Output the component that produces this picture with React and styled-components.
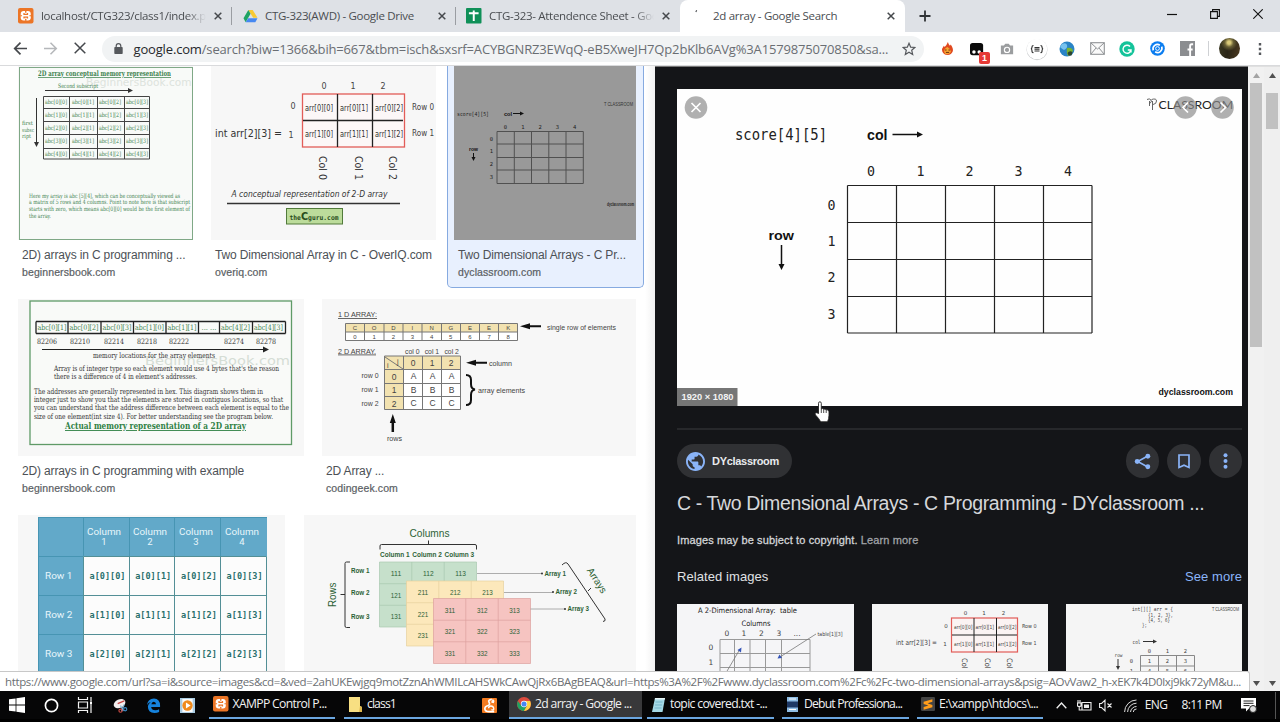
import React from "react";
import styled, { createGlobalStyle } from "styled-components";

const Global = createGlobalStyle`
  * { box-sizing: border-box; }
  html, body { margin: 0; padding: 0; background: #000; overflow: hidden; }
  svg { display: block; flex: none; }
`;

const ui = `"Open Sans", "Noto Sans", sans-serif`;
const arial = `"Liberation Sans", Arial, sans-serif`;

const Screen = styled.div`
  width: 1280px;
  height: 722px;
  display: flex;
  flex-direction: column;
  background: #000;
  overflow: hidden;
  font-family: ${arial};
`;

/* ---------- Browser tabs ---------- */
const TabStrip = styled.div`
  height: 32px;
  flex: none;
  display: flex;
  background: #dee1e6;
  padding-left: 8px;
`;
const Tab = styled.div`
  width: ${(p) => p.$w || 224}px;
  height: 32px;
  display: flex;
  align-items: center;
  padding: 0 9px 0 10px;
  background: ${(p) => (p.$active ? "#fff" : "transparent")};
  border-radius: 8px 8px 0 0;
`;
const Favicon = styled.span`
  width: 16px;
  display: flex;
  justify-content: center;
`;
const TabTitle = styled.span`
  flex: 1;
  margin-left: 7px;
  font: 11.5px/16px ${ui};
  letter-spacing: -0.3px;
  color: #4a4d51;
  white-space: nowrap;
  overflow: hidden;
  ${(p) => p.$fade && "mask-image: linear-gradient(90deg, #000 88%, transparent);"}
`;
const TabClose = styled.span`
  width: 9px;
  margin-left: 8px;
`;
const TabRule = styled.span`
  width: 1px;
  height: 18px;
  margin: 7px 0 0 -1px;
  background: #9a9da2;
`;
const NewTab = styled.div`
  width: 40px;
  height: 32px;
  display: flex;
  align-items: center;
  justify-content: center;
`;
const WindowControls = styled.div`
  margin-left: auto;
  width: 130px;
  height: 27px;
  display: flex;
  align-items: center;
  justify-content: space-around;
`;

/* ---------- Toolbar ---------- */
const Toolbar = styled.div`
  height: 34px;
  flex: none;
  display: flex;
  align-items: center;
  background: #fff;
  border-bottom: 1px solid #d9dadc;
  padding-left: 13px;
`;
const NavIcons = styled.div`
  width: 89px;
  display: flex;
  gap: 15px;
`;
const Omnibox = styled.div`
  width: 822px;
  height: 26px;
  border-radius: 13px;
  background: #f1f3f4;
  display: flex;
  align-items: center;
  padding: 0 8px 0 12px;
`;
const Url = styled.span`
  flex: 1;
  margin-left: 10.5px;
  font: 13px/18px ${ui};
  letter-spacing: -0.16px;
  white-space: nowrap;
  color: #6a6e73;
  b { font-weight: 400; color: #26282b; }
`;
const Extensions = styled.div`
  display: flex;
  align-items: center;
  margin-left: 8px;
`;
const Ext = styled.span`
  width: 30px;
  height: 26px;
  display: flex;
  align-items: center;
  justify-content: center;
  position: relative;
`;
const Badge = styled.span`
  position: absolute;
  right: 2px;
  bottom: -2px;
  width: 11px;
  height: 12px;
  border-radius: 2px;
  background: #e53935;
  color: #fff;
  font: bold 9px/12px ${arial};
  text-align: center;
`;
const MenuDots = styled.span`
  width: 4px;
  margin-left: 18px;
`;
const Rule = styled.span`
  width: 1px;
  height: 15px;
  margin: 0 10px 0 6px;
  background: #cfd1d4;
`;
const Avatar = styled.span`
  width: 21px;
  height: 21px;
  border-radius: 50%;
  background: radial-gradient(circle at 48% 22%, #d9c978 0 8%, #6a6136 22%, transparent 42%),
    linear-gradient(100deg, #3c3a22, #2a2517 45%, #4c3a20);
`;

/* ---------- Page ---------- */
const Page = styled.div`
  height: 625px;
  flex: none;
  display: flex;
  background: #fff;
  position: relative;
  overflow: hidden;
`;
const Results = styled.div`
  width: 655px;
  padding-left: 18px;
  flex: none;
  background: linear-gradient(90deg, #fff 0 645px, #f2f2f2 655px);
`;
const ResultRow = styled.div`
  display: flex;
  gap: ${(p) => p.$gap || 18}px;
  margin-bottom: 18px;
`;
const Card = styled.div`
  width: ${(p) => p.$w}px;
  ${(p) =>
    p.$selected &&
    `
    width: ${p.$w + 15}px;
    margin: 0 -8px -7px -7px;
    padding: 0 7px 6px 6px;
    background: #e8f0fe;
    border: 1px solid #86aae0;
    border-top: 0;
    border-radius: 0 0 5px 5px;
  `}
`;
const CardTitle = styled.div`
  padding: 6px 0 0 4px;
  height: 24px;
  font: 12px/18px ${arial};
  letter-spacing: -0.15px;
  color: #4d5156;
  white-space: nowrap;
`;
const CardSite = styled.div`
  height: 17px;
  padding-left: 4px;
  font: 10.5px/17px ${arial};
  letter-spacing: 0.1px;
  color: #5a5e63;
  -webkit-text-stroke: 0.2px #5a5e63;
`;

const Viewer = styled.div`
  width: 593px;
  flex: none;
  background: #141518;
  border-top: 1px solid #777;
  padding: 22px 6px 0 22px;
`;
const Divider = styled.div`
  height: 2px;
  margin-top: 22px;
  background: #27282b;
`;
const SourceRow = styled.div`
  display: flex;
  align-items: center;
  gap: 8px;
  height: 34px;
  margin-top: 14px;
`;
const SourceChip = styled.div`
  width: 115px;
  height: 34px;
  margin-right: auto;
  display: flex;
  align-items: center;
  gap: 7px;
  padding-left: 9px;
  border-radius: 17px;
  background: #303134;
  color: #e8eaed;
  font: bold 11px/16px ${arial};
  letter-spacing: -0.3px;
`;
const RoundButton = styled.div`
  width: 33.5px;
  height: 34px;
  border-radius: 50%;
  background: #303134;
  display: flex;
  align-items: center;
  justify-content: center;
`;
const ViewerTitle = styled.div`
  margin-top: 13px;
  font: 19.5px/24px ${arial};
  letter-spacing: -0.36px;
  color: #d6d8db;
  white-space: nowrap;
`;
const Copyright = styled.div`
  margin-top: 17px;
  font: 11px/16px ${arial};
  letter-spacing: 0.13px;
  color: #d2d4d7;
  -webkit-text-stroke: 0.3px #d2d4d7;
  span { color: #a0a3a7; -webkit-text-stroke-color: #a0a3a7; }
`;
const RelatedHead = styled.div`
  display: flex;
  justify-content: space-between;
  margin-top: 20px;
  font: 13px/18px ${arial};
  letter-spacing: 0.08px;
  color: #e0e2e5;
  span { color: #8ab4f8; }
`;
const RelatedRow = styled.div`
  display: flex;
  justify-content: space-between;
  margin-top: 18px;
`;
const ScrollTrack = styled.div`
  width: 16px;
  background: ${(p) => p.$bg};
  border-top: 1px solid #e0e0e0;
  display: flex;
  flex-direction: column;
  align-items: center;
  padding: 6px 0 5px;
`;
const ScrollThumb = styled.div`
  width: 12px;
  height: ${(p) => p.$h}px;
  margin: ${(p) => p.$mt}px 0 auto;
  background: #c1c1c1;
`;
const StatusBar = styled.div`
  position: absolute;
  left: 0;
  bottom: 0;
  width: 1250px;
  height: 20px;
  padding-left: 5px;
  background: #fff;
  border-top: 1px solid #c8c8c8;
  border-right: 1px solid #c8c8c8;
  border-radius: 0 3px 0 0;
  font: 11.5px/19px ${ui};
  letter-spacing: -0.36px;
  color: #6c6f73;
  white-space: nowrap;
  overflow: hidden;
`;
const Pointer = styled.span`
  position: absolute;
  left: 814px;
  top: 335px;
`;

/* ---------- Taskbar ---------- */
const Taskbar = styled.div`
  height: 28px;
  flex: none;
  display: flex;
  background: #060607;
  color: #f2f2f2;
`;
const PinnedIcon = styled.div`
  width: ${(p) => p.$w}px;
  height: 28px;
  display: flex;
  align-items: center;
  justify-content: center;
`;
const TaskButton = styled.div`
  width: ${(p) => p.$w}px;
  height: 28px;
  margin-left: ${(p) => p.$ml || 0}px;
  padding-left: ${(p) => p.$pl || 4}px;
  display: flex;
  align-items: center;
  gap: ${(p) => p.$gap || 4}px;
  background: ${(p) => (p.$active ? "#38383a" : "transparent")};
  border-bottom: 2px solid #6ba6e0;
  font: 12.2px/18px ${ui};
  letter-spacing: ${(p) => p.$ls || -0.66}px;
  white-space: nowrap;
`;
const Tray = styled.div`
  display: flex;
  align-items: center;
  font: 12px/18px ${ui};
  letter-spacing: -0.7px;
  white-space: nowrap;
`;
const TrayItem = styled.span`
  width: ${(p) => p.$w}px;
  display: flex;
  justify-content: center;
`;
const ShowDesktop = styled.span`
  width: 1px;
  height: 27px;
  background: #555;
  margin-left: 6px;
`;

/* ---------- Drawing helpers ---------- */
const T = ({ x, y, s = 8, w, a = "start", f = arial, c = "#444", children, ...rest }) => (
  <text x={x} y={y} fontSize={s} textAnchor={a} fill={c} fontFamily={f}
    {...(w ? { textLength: w, lengthAdjust: "spacingAndGlyphs" } : {})} {...rest}>
    {children}
  </text>
);
const Grid = ({ xs, ys, c = "#333", w = 1 }) => (
  <path fill="none" stroke={c} strokeWidth={w}
    d={xs.map((x) => `M${x} ${ys[0]}V${ys[ys.length - 1]}`).join("") + ys.map((y) => `M${xs[0]} ${y}H${xs[xs.length - 1]}`).join("")} />
);
const Pic = ({ x, y, w, h, bg = "#f7f7f7", children }) => (
  <svg width={w} height={h} viewBox={`${x} ${y} ${w} ${h}`}>
    <rect x={x} y={y} width={w} height={h} fill={bg} />
    {children}
  </svg>
);
const dj = `"DejaVu Sans", sans-serif`;
const djm = `"DejaVu Sans Mono", monospace`;
const djs = `"DejaVu Serif", serif`;
const green = "#3f8350";
const dark = "#2d6236";

const MemoryPic = () => (
  <Pic x={18} y={66} w={175} h={174}>
    <rect x="19.5" y="67.5" width="173" height="172" fill="#f8faf8" stroke="#7fa886" />
    <T x={86} y={86} s={10.5} w={105.5} c="#dde3dd" f={dj}>BeginnersBook.com</T>
    <T x={38} y={76} s={7.5} w={133} c={green} f={djs} fontWeight="bold" textDecoration="underline">2D array conceptual memory representation</T>
    <T x={58} y={88} s={6} w={40} c={green} f={djs}>Second subscript</T>
    <path d="M45 90.5H129M36.5 98V142" stroke="#333" />
    <path d="M128 88l5 2.5l-5 2.5zM34 142h5l-2.5 5z" fill="#333" />
    <T x={22} y={125} s={5.5} w={11} c={green} f={djs}>first</T>
    <T x={22} y={132} s={5.5} w={12} c={green} f={djs}>subsc</T>
    <T x={22} y={138} s={5.5} w={9} c={green} f={djs}>ript</T>
    <Grid xs={[43.5, 69.5, 97.5, 124.5, 149.5]} ys={[96.5, 108.5, 121.5, 134.5, 148.5, 159]} c="#444" />
    {[0, 1, 2, 3, 4].map((r) => [0, 1, 2, 3].map((k) => (
      <T key={`${r}${k}`} x={[45, 72, 99, 126][k]} y={104 + r * 13} s={6} w={22} c={green} f={djs}>{`abc[${r}][${k}]`}</T>
    )))}
    <T x={29} y={197.5} s={6} w={151} c={green} f={djs}>Here my array is abc [5][4], which can be conceptually viewed as</T>
    <T x={29} y={204} s={6} w={161} c={green} f={djs}>a matrix of 5 rows and 4 columns. Point to note here is that subscript</T>
    <T x={29} y={211} s={6} w={161} c={green} f={djs}>starts with zero, which means abc[0][0] would be the first element of</T>
    <T x={29} y={217.5} s={6} w={22} c={green} f={djs}>the array.</T>
  </Pic>
);

const OverIqPic = () => (
  <Pic x={211} y={66} w={225} h={174}>
    {[0, 1, 2].map((k) => <T key={k} x={[324, 353, 383][k]} y={89} a="middle" s={8} f={dj}>{k}</T>)}
    <T x={293} y={109} a="middle" s={8} f={dj}>0</T>
    <T x={291} y={138} a="middle" s={8} f={dj}>1</T>
    <T x={215} y={136.5} s={10} w={67} f={dj} c="#333">int arr[2][3] =</T>
    <rect x="302.5" y="94" width="102" height="53" fill="#fcf7f7" stroke="#e25c58" strokeWidth="1.3" />
    <path d="M303 120.5H403M337.5 94V147M372.5 94V147" stroke="#222" strokeWidth="1.3" />
    {[0, 1].map((r) => [0, 1, 2].map((k) => (
      <T key={`${r}${k}`} x={[305, 340, 375][k]} y={110.5 + r * 26} s={8} w={28} f={dj} c="#333">{`arr[${r}][${k}]`}</T>
    )))}
    <T x={412} y={110} s={8} w={22} f={dj}>Row 0</T>
    <T x={412} y={136} s={8} w={22} f={dj}>Row 1</T>
    {[0, 1, 2].map((k) => (
      <g key={k} transform={`translate(${[319, 354.5, 388.5][k]} 156) rotate(90)`}>
        <T x={0} y={0} s={10} w={24} f={dj} c="#333">{`Col ${k}`}</T>
      </g>
    ))}
    <T x={231.5} y={196.5} s={8.5} w={156} f={dj} c="#333" fontStyle="italic">A conceptual representation of 2-D array</T>
    <path d="M227 203.5H400" stroke="#333" strokeWidth="1.5" />
    <rect x="286.5" y="208.5" width="56" height="15.5" fill="#bcdc9b" stroke="#527b3b" />
    <text x="289.5" y="220" fontSize="6.8" fontFamily={djm} fontWeight="bold" fill="#294d1c" textLength="49" lengthAdjust="spacingAndGlyphs">
      the<tspan fontSize="10.5" fontFamily={dj}>C</tspan>guru.com
    </text>
  </Pic>
);

const ScorePicSmall = () => (
  <Pic x={454} y={66} w={182} h={174} bg="#999">
    <T x={604} y={105.5} s={5.5} w={29} c="#333">T CLASSROOM</T>
    <T x={457} y={115.5} s={5.5} w={32} f={djm} c="#222">score[4][5]</T>
    <T x={504} y={115.5} s={5.5} w={8} c="#111" fontWeight="bold">col</T>
    <path d="M513 113.5H522M473.5 153V158" stroke="#111" />
    <path d="M520 111.5l4 2l-4 2zM471.5 157h4l-2 4z" fill="#111" />
    <T x={469} y={150.5} s={5.5} w={9} c="#111" fontWeight="bold">row</T>
    {[0, 1, 2, 3, 4].map((k) => <T key={k} x={505.5 + k * 17.3} y={128.5} s={5.5} a="middle" f={djm} c="#222">{k}</T>)}
    {[0, 1, 2, 3].map((k) => <T key={k} x={491.5} y={140.5 + k * 12.7} s={5.5} a="middle" f={djm} c="#222">{k}</T>)}
    <Grid xs={[497, 514.3, 531.5, 548.8, 566, 583.3]} ys={[131.5, 144, 157.5, 170, 183.5]} c="#505050" />
    <T x={607} y={205.5} s={5} w={27} c="#222" fontWeight="bold">dyclassroom.com</T>
  </Pic>
);

const ActualPic = () => {
  const xs = [36, 68, 101, 133.5, 166, 198.5, 219.5, 252.5, 285.5];
  const labels = ["abc[0][1]", "abc[0][2]", "abc[0][3]", "abc[1][0]", "abc[1][1]", "... ...", "abc[4][2]", "abc[4][3]"];
  const addr = [["82206", 37], ["82210", 70], ["82214", 104], ["82218", 137], ["82222", 169], ["82274", 224], ["82278", 256]];
  return (
    <Pic x={18} y={299} w={286} h={157}>
      <rect x="30" y="301" width="261.5" height="143.5" fill="#f9faf8" stroke="#5f9a67" strokeWidth="1.3" />
      <T x={145} y={364.5} s={11.5} w={145} c="#d5ddd5" f={dj}>BeginnersBook.com</T>
      <Grid xs={xs} ys={[321.5, 333.5]} c="#222" w={1.3} />
      {labels.map((l, i) => <T key={i} x={xs[i] + (i === 5 ? 3 : 1.5)} y={329.5} s={7.5} w={i === 5 ? 15 : 29} c={green} f={djs}>{l}</T>)}
      {addr.map(([l, x]) => <T key={l} x={x} y={344} s={7.5} w={20} f={djs} c="#333">{l}</T>)}
      <path d="M42 349.5H264" stroke="#222" />
      <path d="M263 346.5l6 3l-6 3z" fill="#222" />
      <T x={93} y={357.5} s={7.5} w={122} f={djs} c="#333">memory locations for the array elements</T>
      <T x={54} y={370.5} s={7.5} w={225} f={djs} c="#333">Array is of integer type so each element would use 4 bytes that's the reason</T>
      <T x={54} y={378.5} s={7.5} w={143} f={djs} c="#333">there is a difference of 4 in element's addresses.</T>
      <T x={34} y={393.5} s={7.5} w={229} f={djs} c="#333">The addresses are generally represented in hex. This diagram shows them in</T>
      <T x={34} y={401.5} s={7.5} w={249} f={djs} c="#333">integer just to show you that the elements are stored in contiguos locations, so that</T>
      <T x={34} y={410} s={7.5} w={255} f={djs} c="#333">you can understand  that the address difference between each element is equal to the</T>
      <T x={34} y={418.5} s={7.5} w={239} f={djs} c="#333">size of one element(int size 4). For better understanding see the program below.</T>
      <T x={65} y={429} s={9} w={181} f={djs} c="#2e8043" fontWeight="bold" textDecoration="underline">Actual memory representation of a 2D array</T>
    </Pic>
  );
};

const CodinGeekPic = () => {
  const xs = [345.5, 364.5, 384, 403, 422, 441.5, 460.5, 479.5, 498.5, 517.5];
  return (
    <Pic x={322} y={299} w={314} h={157}>
      <T x={338} y={317} s={8} w={39} textDecoration="underline">1 D ARRAY:</T>
      <rect x="345.5" y="323" width="172" height="9" fill="#f2e2b0" />
      <rect x="345.5" y="332" width="172" height="8.5" fill="#fff" />
      <Grid xs={xs} ys={[323.5, 332, 340.5]} c="#777" />
      {"CODINGEEK".split("").map((l, i) => (
        <React.Fragment key={i}>
          <T x={355 + i * 19.15} y={330} s={6} a="middle">{l}</T>
          <T x={355 + i * 19.15} y={338.8} s={6} a="middle">{i}</T>
        </React.Fragment>
      ))}
      <path d="M526 326.3H541M473 362.8H487" stroke="#111" strokeWidth="2" />
      <path d="M520 326.3l10-3v6zM466 362.8l10-3v6zM392.8 414l3 9h-6z" fill="#111" />
      <path d="M392.8 421V432" stroke="#111" strokeWidth="2.5" />
      <T x={547} y={329.5} s={8} w={69}>single row of elements</T>
      <T x={338} y={353.5} s={8} w={38} textDecoration="underline">2 D ARRAY.</T>
      {[0, 1, 2].map((k) => <T key={k} x={405 + k * 19.7} y={354} s={7.5} w={14.5}>{`col ${k}`}</T>)}
      <rect x="384.5" y="356" width="76" height="53.5" fill="#fff" />
      <rect x="384.5" y="356" width="76" height="13.5" fill="#f2e2b0" />
      <rect x="384.5" y="356" width="19" height="53.5" fill="#f2e2b0" />
      <Grid xs={[384.5, 403.5, 422.5, 441.5, 460.5]} ys={[356, 369.5, 383.5, 396.5, 409.5]} c="#777" />
      <path d="M385 357L403 369" stroke="#777" />
      <T x={387} y={367.5} s={7}>i</T>
      <T x={397} y={363.5} s={7}>j</T>
      {[0, 1, 2].map((k) => (
        <React.Fragment key={k}>
          <T x={413 + k * 19} y={365.5} s={8.5} a="middle">{k}</T>
          <T x={394} y={379.5 + k * 13.5} s={8.5} a="middle">{k}</T>
          <T x={361.5} y={377.5 + k * 14} s={7.5} w={17}>{`row ${k}`}</T>
          {[0, 1, 2].map((m) => <T key={m} x={413.5 + m * 19} y={379 + k * 13.5} s={8.5} a="middle">{"ABC"[k]}</T>)}
        </React.Fragment>
      ))}
      <path d="M466 375q5 0 5 5v4q0 5 4 5.5q-4 .5-4 5.5v5q0 5-5 5" fill="none" stroke="#111" strokeWidth="2" />
      <T x={489} y={365.5} s={8} w={23}>column</T>
      <T x={478} y={392.5} s={8} w={47}>array elements</T>
      <T x={387} y={440.5} s={8} w={15}>rows</T>
    </Pic>
  );
};

const TablePic = () => (
  <Pic x={18} y={515} w={267} h={176}>
    <rect x="38" y="517" width="229" height="174" fill="#fcfcfc" />
    <path d="M38 517H267V556.5H83.5V691H38z" fill="#62a9c9" />
    <path d="M83.5 518V556M129.5 518V556M174.5 518V556M220.5 518V556M38 556.5H83M38 595.5H83M38 634.5H83M38.5 517V691M38 517.5H267" stroke="#4795b3" fill="none" />
    <Grid xs={[83.5, 129.5, 174.5, 220.5, 266.5]} ys={[556.5, 595.5, 634.5, 691]} c="#538f96" />
    {[0, 1, 2, 3].map((k) => (
      <React.Fragment key={k}>
        <T x={104 + k * 46} y={535} s={9.5} w={34} a="middle" c="#e8f6fb" f="Roboto, sans-serif">Column</T>
        <T x={104 + k * 46} y={545} s={9.5} a="middle" c="#e8f6fb" f="Roboto, sans-serif">{k + 1}</T>
        {[0, 1, 2].map((r) => (
          <T key={r} x={89.5 + k * 45.7} y={578.5 + r * 39} s={9} w={36} c="#28706c" f={djm} fontWeight="bold">{`a[${r}][${k}]`}</T>
        ))}
      </React.Fragment>
    ))}
    {[1, 2, 3].map((r) => <T key={r} x={45} y={540 + r * 39} s={9.5} w={27.5} c="#e8f6fb" f="Roboto, sans-serif">{`Row ${r}`}</T>)}
  </Pic>
);

const Slab = ({ x, y, fill, line, n }) => (
  <>
    <rect x={x} y={y} width="97" height="65" fill={fill} />
    <Grid xs={[x, x + 32.3, x + 64.7, x + 97]} ys={[y, y + 21.7, y + 43.3, y + 65]} c={line} w={0.7} />
    {[0, 1, 2].map((r) => [0, 1, 2].map((k) => (n < 3 && r > 0 && k > 0) ? null : (
      <T key={`${r}${k}`} x={x + 16.5 + k * 32.3} y={y + 14 + r * 21.5} s={7} w={10.5} a="middle" c={dark}>{`${n}${r + 1}${k + 1}`}</T>
    )))}
  </>
);

const Array3dPic = () => (
  <Pic x={304} y={515} w={332} h={176}>
    <T x={409.5} y={536.5} s={10.5} w={40} c={dark}>Columns</T>
    <path d="M380 549.5V546q0-1.5 1.5-1.5H475q1.5 0 1.5 1.5V549.5M428.5 544.5V540.5M350 562H346.5q-1.5 0-1.5 1.5V626q0 1.5 1.5 1.5H350M345 594.5H340.5M562 565q4-4 6-1L605 619q1 2-2 2.5M588 591l3-3" fill="none" stroke="#333" />
    {[0, 1, 2].map((k) => (
      <React.Fragment key={k}>
        <T x={380 + k * 32.3} y={557} s={7} w={29.5} c={dark} fontWeight="bold">{`Column ${k + 1}`}</T>
        <T x={351} y={[573, 594.5, 618.5][k]} s={7} w={18.5} c={dark} fontWeight="bold">{`Row ${k + 1}`}</T>
      </React.Fragment>
    ))}
    <g transform="translate(336 607) rotate(-90)"><T x={0} y={0} s={10} w={24.5} c={dark}>Rows</T></g>
    <g transform="translate(586.5 570.5) rotate(57)"><T x={0} y={0} s={10} w={28} c={dark}>Arrays</T></g>
    <Slab x={379.5} y={562} fill="#c6e0cb" line="#a9c9b0" n={1} />
    <Slab x={406.5} y={581} fill="#fce8bb" line="#e6d19d" n={2} />
    <Slab x={433.5} y={598.5} fill="#f6c4c1" line="#dda09d" n={3} />
    <path d="M477 573.5H542M504 592.5H553M530.5 609H565" stroke="#999" strokeWidth=".8" />
    {[[542, 573.5], [553, 592], [565, 609]].map(([x, y], i) => (
      <React.Fragment key={i}>
        <circle cx={x} cy={y} r="1" fill="#333" />
        <T x={x + 2.5} y={y + 2} s={7} w={21.5} c={dark} fontWeight="bold">{`Array ${i + 1}`}</T>
      </React.Fragment>
    ))}
  </Pic>
);

const RoundGlyph = ({ x, d }) => (
  <g>
    <circle cx={x} cy="107.5" r="11.3" fill="#8a8a8a" fillOpacity=".68" />
    <path d={d} fill="none" stroke="#fff" strokeWidth="1.7" />
  </g>
);

const ScorePic = () => (
  <Pic x={677} y={89} w={565} h={317} bg="#fefefe">
    <T x={735} y={139.5} s={15} w={92} f={djm} c="#222">score[4][5]</T>
    <T x={867} y={140} s={14} w={20.5} c="#111" fontWeight="bold">col</T>
    <path d="M892.5 134.5H918M781.5 245V265" stroke="#111" strokeWidth="1.5" />
    <path d="M917 131.5l6 3l-6 3zM778.5 264h6l-3 6z" fill="#111" />
    {[871, 920.5, 969.5, 1018.5, 1068].map((x, k) => <T key={k} x={x} y={175.5} s={14} w={8} a="middle" f={djm} c="#222">{k}</T>)}
    {[0, 1, 2, 3].map((k) => <T key={k} x={831.5} y={210 + k * 36.2} s={14} w={8} a="middle" f={djm} c="#222">{k}</T>)}
    <Grid xs={[847.5, 896.5, 945.5, 994.5, 1043.5, 1092]} ys={[185.5, 222.5, 259.5, 296.5, 333]} c="#222" w={1.2} />
    <T x={768.5} y={240} s={13.5} w={25.5} c="#111" fontWeight="bold">row</T>
    <path d="M1147 99.500q2.500-1.500 4 .5t-1.500 3.500M1151.500 99.500q5-1.500 5 1.500t-3.500 3.500M1152.500 101v9M1149.500 101v5" fill="none" stroke="#555" strokeWidth=".9" />
    <T x={1158.5} y={109} s={12} w={74.5} f="Lato, sans-serif" c="#222">CLASSROOM</T>
    <RoundGlyph x={696} d="M691.5 103l9 9M700.5 103l-9 9" />
    <RoundGlyph x={1185.5} d="M1188 102.5l-5 5l5 5" />
    <RoundGlyph x={1222.5} d="M1220.5 102.5l5 5l-5 5" />
    <rect x="677" y="388" width="60.5" height="18" fill="#767676" />
    <T x={681.5} y={400} s={9.5} w={52} c="#f3f3f3" fontWeight="bold">1920 × 1080</T>
    <T x={1158.5} y={395} s={9.5} w={74.5} c="#111" fontWeight="bold">dyclassroom.com</T>
  </Pic>
);

const RelatedTable = () => (
  <Pic x={677} y={604} w={177} h={87} bg="#f5f5f7">
    <T x={698} y={612.5} s={7.5} w={99} f={dj} c="#222" xmlSpace="preserve">A 2-Dimensional Array:  table</T>
    <T x={741.5} y={626} s={7.5} w={29} f={dj} c="#222">Columns</T>
    {["0", "1", "2", "3", "..."].map((l, i) => <T key={l} x={[727, 744, 761.5, 779, 797][i]} y={636} s={7.5} a="middle" f={dj}>{l}</T>)}
    <T x={817.5} y={635.5} s={5.5} w={25} f={dj}>table[1][3]</T>
    <T x={711} y={650} s={7.5} a="middle" f={dj}>0</T>
    <T x={711} y={665} s={7.5} a="middle" f={dj}>1</T>
    <Grid xs={[720, 734.5, 750, 765.5, 781.5, 810]} ys={[639.5, 653.5, 667.5, 682]} c="#999" />
    <path d="M726.5 672L740 649M816 634L780 657" stroke="#777" strokeWidth=".8" />
    <path d="M741.5 647.5l-.5 5l-3.5-2.5zM777.5 658.5l2-4l2.5 3.5z" fill="#3454b8" />
  </Pic>
);

const RelatedOver = () => (
  <Pic x={872} y={604} w={176} h={87} bg="#f5f5f5">
    {[0, 1, 2].map((k) => <T key={k} x={[965.5, 984, 1003.5][k]} y={615} s={5.5} a="middle" f={dj}>{k}</T>)}
    <T x={946} y={627.5} s={5.5} a="middle" f={dj}>0</T>
    <T x={945} y={646} s={5.5} a="middle" f={dj}>1</T>
    <T x={896} y={645} s={7} w={41} f={dj}>int arr[2][3] =</T>
    <rect x="951.5" y="618" width="66" height="34" fill="#fbf3f3" stroke="#e25c58" strokeWidth="1.2" />
    <path d="M952 635H1017M974 618V652M996.5 618V652" stroke="#222" />
    {[0, 1].map((r) => [0, 1, 2].map((k) => (
      <T key={`${r}${k}`} x={[954, 975.5, 998][k]} y={628.5 + r * 17.5} s={5.5} w={18.5} f={dj}>{`arr[${r}][${k}]`}</T>
    )))}
    <T x={1022} y={628} s={5.5} w={14.5} f={dj}>Row 0</T>
    <T x={1022} y={645} s={5.5} w={14.5} f={dj}>Row 1</T>
    {[0, 1, 2].map((k) => (
      <g key={k} transform={`translate(${[962, 985, 1007][k]} 658) rotate(90)`}>
        <T x={0} y={0} s={7.5} w={17} f={dj}>{`Col ${k}`}</T>
      </g>
    ))}
  </Pic>
);

const RelatedInit = () => (
  <Pic x={1066} y={604} w={176} h={87} bg="#f5f5f5">
    <T x={1132} y={611} s={5.5} w={41} f={djm}>{"int[][] arr = {"}</T>
    <T x={1148} y={616.5} s={5.5} w={25} f={djm}>{"{1, 2, 3},"}</T>
    <T x={1148} y={621.5} s={5.5} w={22} f={djm}>{"{4, 5, 6}"}</T>
    <T x={1142} y={626.5} s={5.5} w={5} f={djm}>{"};"}</T>
    <T x={1212} y={611} s={5} w={27}>T CLASSROOM</T>
    <T x={1132.5} y={643.5} s={5.5} w={8} f={djm}>col</T>
    <path d="M1143 641.5H1154M1118 659V667" stroke="#333" />
    <path d="M1153 639.5l4 2l-4 2zM1116 666h4l-2 4z" fill="#333" />
    <T x={1114.5} y={657} s={5} w={8} f={djm}>row</T>
    {[0, 1, 2].map((k) => (
      <React.Fragment key={k}>
        <T x={1149.5 + k * 18} y={652.5} s={5.5} a="middle" f={djm}>{k}</T>
        <T x={1149.5 + k * 18} y={663} s={5.5} a="middle" f={djm}>{k + 1}</T>
        <T x={1149.5 + k * 18} y={672.5} s={5.5} a="middle" f={djm}>{k + 4}</T>
      </React.Fragment>
    ))}
    <T x={1131.5} y={663} s={5.5} a="middle" f={djm}>0</T>
    <T x={1131.5} y={672.5} s={5.5} a="middle" f={djm}>1</T>
    <Grid xs={[1140.5, 1158.5, 1176.5, 1194.5]} ys={[655.5, 666, 677]} c="#888" />
  </Pic>
);

/* ---------- Icons ---------- */
const Ico = ({ w = 16, h = w, box = "0 0 16 16", children }) => (
  <svg width={w} height={h} viewBox={box} fill="none">{children}</svg>
);
const XamppIcon = () => (
  <Ico w={15.5}>
    <rect width="16" height="16" rx="2" fill="#ec7526" />
    <rect x="2.8" y="3.2" width="10.4" height="9.6" rx="3" fill="#fff" />
    <path d="M6.2 5.2v1.5h3.6V5.2M6.2 10.8V9.3h3.6v1.5" stroke="#ec7526" strokeWidth="1.3" />
    <path d="M7.3 2.8h1.4v2.2H7.3zM7.3 11h1.4v2.2H7.3zM2.5 7.4h1.7v1.2H2.5zM11.8 7.4h1.7v1.2h-1.7z" fill="#ec7526" />
  </Ico>
);
const DriveIcon = () => (
  <Ico w={15} h={14}>
    <path d="M5.5 1h5l5.5 9h-5z" fill="#f9c932" />
    <path d="M5.5 1L0 10.5L2.5 15L8 5.5z" fill="#1fa463" />
    <path d="M5.3 10.5H16L13.5 15H2.5z" fill="#4688f1" />
  </Ico>
);
const SheetIcon = () => (
  <Ico w={15.5}>
    <rect width="16" height="16" rx="1" fill="#0f9058" />
    <path d="M3 5.5h10M8 2.5v11" stroke="#fff" strokeWidth="2" />
  </Ico>
);
const CloseX = () => (
  <Ico w={8} box="0 0 8 8"><path d="M.7.7l6.6 6.6M7.3.7L.7 7.3" stroke="#45484c" strokeWidth="1.5" /></Ico>
);
const Globe = ({ size = 21 }) => (
  <svg width={size} height={size} viewBox="2 2 20 20">
    <path fill="#8ab4f8" d="M12 2C6.48 2 2 6.48 2 12s4.48 10 10 10 10-4.48 10-10S17.52 2 12 2zm-1 17.93c-3.95-.49-7-3.85-7-7.93 0-.62.08-1.21.21-1.79L9 15v1c0 1.1.9 2 2 2v1.93zm6.9-2.54c-.26-.81-1-1.39-1.9-1.39h-1v-3c0-.55-.45-1-1-1H8v-2h2c.55 0 1-.45 1-1V7h2c1.1 0 2-.9 2-2v-.41c2.93 1.19 5 4.06 5 7.41 0 2.08-.8 3.97-2.1 5.39z" />
  </svg>
);
const ArrowTip = ({ up, c }) => (
  <Ico w={7} h={5} box="0 0 7 5"><path d={up ? "M3.5 0L7 5H0z" : "M0 0h7L3.5 5z"} fill={c} /></Ico>
);

const Result = ({ w, title, site, selected, children }) => (
  <Card $w={w} $selected={selected}>
    {children}
    <CardTitle>{title}</CardTitle>
    <CardSite>{site}</CardSite>
  </Card>
);

export default function App() {
  return (
    <Screen>
      <Global />
      <TabStrip>
        <Tab>
          <Favicon><XamppIcon /></Favicon>
          <TabTitle $fade>localhost/CTG323/class1/index.php</TabTitle>
          <TabClose><CloseX /></TabClose>
        </Tab>
        <TabRule />
        <Tab>
          <Favicon><DriveIcon /></Favicon>
          <TabTitle>CTG-323(AWD) - Google Drive</TabTitle>
          <TabClose><CloseX /></TabClose>
        </Tab>
        <TabRule />
        <Tab>
          <Favicon><SheetIcon /></Favicon>
          <TabTitle $fade>CTG-323- Attendence Sheet - Google Sheets</TabTitle>
          <TabClose><CloseX /></TabClose>
        </Tab>
        <Tab $active $w={225}>
          <Favicon><Ico w={14}><path d="M5.5 3.5l1-2" stroke="#4a4d51" strokeWidth="1.3" /></Ico></Favicon>
          <TabTitle>2d array - Google Search</TabTitle>
          <TabClose><CloseX /></TabClose>
        </Tab>
        <NewTab><Ico w={12} box="0 0 12 12"><path d="M6 .5v11M.5 6h11" stroke="#303336" strokeWidth="1.8" /></Ico></NewTab>
        <WindowControls>
          <Ico w={10} box="0 0 10 10"><path d="M0 5.5h10" stroke="#111" strokeWidth="1.2" /></Ico>
          <Ico w={10} box="0 0 10 10"><path d="M.6 2.6h6.8v6.8H.6zM2.6 2.6V.6h6.8v6.8H7.4" stroke="#111" strokeWidth="1.1" /></Ico>
          <Ico w={10} box="0 0 10 10"><path d="M.3.3l9.4 9.4M9.7.3L.3 9.7" stroke="#111" strokeWidth="1.1" /></Ico>
        </WindowControls>
      </TabStrip>

      <Toolbar>
        <NavIcons>
          <Ico w={15} box="0 0 15 14"><path d="M14 7H2M7.5 1.2L1.7 7l5.8 5.8" stroke="#45484c" strokeWidth="1.7" /></Ico>
          <Ico w={15} box="0 0 15 14"><path d="M1 7h12M7.5 1.2L13.3 7l-5.8 5.8" stroke="#b5b7ba" strokeWidth="1.5" /></Ico>
          <Ico w={14} box="0 0 14 14"><path d="M1.7 1.7l10.6 10.6M12.3 1.7L1.7 12.3" stroke="#45484c" strokeWidth="1.5" /></Ico>
        </NavIcons>
        <Omnibox>
          <Ico w={9} h={11} box="0 0 9 11"><path d="M2.2 4.5V3a2.3 2.3 0 0 1 4.6 0v1.5" stroke="#55585c" strokeWidth="1.2" /><rect x=".3" y="4" width="8.4" height="7" rx=".8" fill="#55585c" /></Ico>
          <Url><b>google.com</b>/search?biw=1366&bih=667&tbm=isch&sxsrf=ACYBGNRZ3EWqQ-eB5XweJH7Qp2bKlb6AVg%3A1579875070850&sa...</Url>
          <Ico w={14}><path d="M8 1.5l1.9 4.4 4.8.4-3.6 3.2 1.1 4.7L8 11.7l-4.2 2.5 1.1-4.7L1.3 6.3l4.8-.4z" stroke="#55585c" strokeWidth="1.4" /></Ico>
        </Omnibox>
        <Extensions>
          <Ext>
            <Ico w={13} h={15}>
              <path d="M8.5 0q.5 2.5 2.5 4.5L12 3q3.5 5 2.5 8.5Q13 16 8 16t-6.5-4.5Q.5 8 3.5 4.5l1 1.5Q7 4 8.5 0z" fill="#e0491f" />
              <path d="M8 6q4 2.5 4 5.5T8 15t-4-3.5T8 6z" fill="#f7a531" />
              <path d="M6 9v1.8M10 9v1.8M6 12.8h4" stroke="#5a1f0a" strokeWidth="1.1" />
            </Ico>
          </Ext>
          <Ext>
            <Ico w={14}><rect y="1" width="15" height="14" rx="3" fill="#0b0b0b" /><circle cx="4.5" cy="11.5" r="2" fill="#fff" /><circle cx="10.5" cy="11.5" r="2" fill="#fff" /></Ico>
            <Badge>1</Badge>
          </Ext>
          <Ext>
            <Ico w={14}><path d="M1 4h3.5L6 2h4l1.5 2H15v10H1z" fill="#9b9d9f" /><circle cx="8" cy="9" r="3" stroke="#fff" strokeWidth="1.3" /></Ico>
          </Ext>
          <Ext>
            <Ico w={24} box="0 0 24 24">
              <circle cx="12" cy="12.7" r="10.5" fill="#c9cbcd" />
              <circle cx="12" cy="12" r="10.3" fill="#fff" />
              <path d="M8.5 8.5q-1.5 0-1.5 1.5T6 12q1 0 1 2t1.5 1.5M15.5 8.5q1.5 0 1.5 1.5t1 2q-1 0-1 2t-1.5 1.5M9.5 10.5h5M9.5 12.2h5M9.5 14h5" stroke="#333" strokeWidth="1.2" />
            </Ico>
          </Ext>
          <Ext>
            <Ico w={16}><circle cx="8" cy="8" r="7.5" fill="#2a84c6" /><path d="M3 3q4-2 5 1t-3 5q-2-1-4-3z" fill="#76c2ee" /><path d="M8 7q5-1 6 3l-4 5q-3-1-2-8z" fill="#79b531" /><path d="M8.5 12q2-3 5-1l-1 3.5h-3z" fill="#31452d" /></Ico>
          </Ext>
          <Ext>
            <Ico w={15} h={13} box="0 0 15 13"><rect x=".7" y=".7" width="13.6" height="11.6" fill="#fafafa" stroke="#909396" strokeWidth="1.1" /><path d="M1 1l6.5 6L14 1M1 12l5-6M14 12L9 6" stroke="#909396" /></Ico>
          </Ext>
          <Ext>
            <Ico w={16}><circle cx="8" cy="8" r="7.7" fill="#15c39a" /><path d="M11 5.5A4 4 0 1 0 12 9H8.8M12 9v2.5" stroke="#fff" strokeWidth="1.4" /></Ico>
          </Ext>
          <Ext>
            <Ico w={15}><circle cx="8" cy="8" r="7.8" fill="#0b7df0" /><path d="M3.5 10a4.7 4.7 0 0 1 7-5.5M12.5 6a4.7 4.7 0 0 1-7 5.5" stroke="#fff" strokeWidth="1.7" /><circle cx="8" cy="8" r="2" stroke="#fff" /></Ico>
          </Ext>
          <Ext>
            <Ico w={15}><rect width="16" height="16" fill="#8b8d90" /><path d="M14 3.5h-1.5q-1.7 0-1.7 1.7V16M8 9h5.5" stroke="#fff" strokeWidth="2" /></Ico>
          </Ext>
          <Rule />
          <Avatar />
          <MenuDots>
            <Ico w={4} h={14} box="0 0 4 14"><path d="M.8 1h2.4v2.4H.8zM.8 5.8h2.4v2.4H.8zM.8 10.6h2.4V13H.8z" fill="#55585c" /></Ico>
          </MenuDots>
        </Extensions>
      </Toolbar>

      <Page>
        <Results>
          <ResultRow>
            <Result w={175} title="2D) arrays in C programming ..." site="beginnersbook.com"><MemoryPic /></Result>
            <Result w={225} title="Two Dimensional Array in C - OverIQ.com" site="overiq.com"><OverIqPic /></Result>
            <Result w={182} selected title="Two Dimensional Arrays - C Pr..." site="dyclassroom.com"><ScorePicSmall /></Result>
          </ResultRow>
          <ResultRow>
            <Result w={286} title="2D) arrays in C programming with example" site="beginnersbook.com"><ActualPic /></Result>
            <Result w={314} title="2D Array ..." site="codingeek.com"><CodinGeekPic /></Result>
          </ResultRow>
          <ResultRow $gap={19}>
            <TablePic />
            <Array3dPic />
          </ResultRow>
        </Results>

        <Viewer>
          <ScorePic />
          <Divider />
          <SourceRow>
            <SourceChip><Globe size={19} />DYclassroom</SourceChip>
            <RoundButton>
              <Ico w={17}><path d="M12.5 3L3.5 8l9 5" stroke="#8ab4f8" strokeWidth="1.5" /><circle cx="13" cy="3" r="2.3" fill="#8ab4f8" /><circle cx="3" cy="8" r="2.3" fill="#8ab4f8" /><circle cx="13" cy="13" r="2.3" fill="#8ab4f8" /></Ico>
            </RoundButton>
            <RoundButton>
              <Ico w={12} h={15} box="0 0 12 15"><path d="M1 1h10v12.5l-5-2.3-5 2.3z" stroke="#8ab4f8" strokeWidth="1.7" /></Ico>
            </RoundButton>
            <RoundButton>
              <Ico w={5} h={16} box="0 0 5 16"><circle cx="2.5" cy="2.3" r="2" fill="#8ab4f8" /><circle cx="2.5" cy="8" r="2" fill="#8ab4f8" /><circle cx="2.5" cy="13.7" r="2" fill="#8ab4f8" /></Ico>
            </RoundButton>
          </SourceRow>
          <ViewerTitle>C - Two Dimensional Arrays - C Programming - DYclassroom ...</ViewerTitle>
          <Copyright>Images may be subject to copyright. <span>Learn more</span></Copyright>
          <RelatedHead>Related images<span>See more</span></RelatedHead>
          <RelatedRow><RelatedTable /><RelatedOver /><RelatedInit /></RelatedRow>
        </Viewer>

        <ScrollTrack $bg="#f1f1f1">
          <ArrowTip up c="#a3a3a3" />
          <ScrollThumb $h={264} $mt={5} />
          <ArrowTip c="#505050" />
        </ScrollTrack>
        <ScrollTrack $bg="#efefef">
          <ArrowTip up c="#505050" />
          <ScrollThumb $h={36} $mt={15} />
          <ArrowTip c="#505050" />
        </ScrollTrack>

        <StatusBar>https://www.google.com/url?sa=i&source=images&cd=&ved=2ahUKEwjgq9motZznAhWMILcAHSWkCAwQjRx6BAgBEAQ&url=https%3A%2F%2Fwww.dyclassroom.com%2Fc%2Fc-two-dimensional-arrays&psig=AOvVaw2_h-xEK7k4D0lxj9kk72yM&u...</StatusBar>
        <Pointer>
          <Ico w={17} h={22} box="0 0 17 22">
            <path d="M4.5 12.5V2.3q0-1.5 1.4-1.5t1.4 1.5V8q1.3-1 2.4.3 1.5-.8 2.4.5 2.9-.6 2.9 2v3.4q0 3.8-1.5 6.6H6.7Q5 17.5 1.5 14q-1-1.3 0-2.1 1.3-.7 3 .6z" fill="#fff" stroke="#222" strokeWidth=".9" />
            <path d="M7.3 8v4M9.7 8.5V12M12.2 9v3" stroke="#222" strokeWidth=".8" />
          </Ico>
        </Pointer>
      </Page>

      <Taskbar>
        <PinnedIcon $w={34}><Ico w={16}><path d="M0 2.3L6.6 1.4V7.6H0zM7.4 1.3L16 0V7.6H7.4zM0 8.4H6.6V14.6L0 13.7zM7.4 8.4H16V16L7.4 14.7z" fill="#fff" /></Ico></PinnedIcon>
        <PinnedIcon $w={34}><Ico w={15}><circle cx="8" cy="8" r="6.5" stroke="#fff" strokeWidth="1.8" /></Ico></PinnedIcon>
        <PinnedIcon $w={34}><Ico w={16}><path d="M1.5 0v2.5h9V0M1.5 16v-2.5h9V16M1.5 5h9v6h-9zM14 0v4M14 7v9" stroke="#f2f2f2" strokeWidth="1.2" /><path d="M13 4.5h2v2.5h-2z" fill="#fff" /></Ico></PinnedIcon>
        <PinnedIcon $w={36}><Ico w={15}><ellipse cx="7" cy="6" rx="6.5" ry="4.5" transform="rotate(-25 7 6)" fill="#f2eeee" /><path d="M5 6l7-3" stroke="#c74444" strokeWidth="1.5" /><path d="M8 8l3 6M12 7l-3 7" stroke="#7fb4d8" strokeWidth="1.2" /><circle cx="8" cy="13.5" r="1.7" stroke="#d14b45" strokeWidth="1.2" /><circle cx="13" cy="12" r="1.7" stroke="#3d8cc8" strokeWidth="1.2" /></Ico></PinnedIcon>
        <PinnedIcon $w={30}><Ico w={15}><path d="M1 7.5Q2 .5 8.5.5 15 1 15 8v1.5H5.5q.5 3.5 4.5 3.5 2.5 0 4-1v3q-2 1-5 1-7-.5-7-7Q2.500 5.500 6 4 2.500 4.500 1 7.500zM5.700 6.700h5Q10.500 4 8.300 4T5.700 6.700z" fill="#1683dd" /></Ico></PinnedIcon>
        <PinnedIcon $w={38}><Ico w={15}><rect width="16" height="16" fill="#a9cbe2" /><rect x="2.5" y="1" width="11" height="14" fill="#fafafa" /><circle cx="8" cy="8" r="5.5" fill="#f08a1c" /><path d="M6.3 4.8l5 3.2-5 3.2z" fill="#fff" /></Ico></PinnedIcon>
        <TaskButton $w={126} $ml={3}><XamppIcon />XAMPP Control P...</TaskButton>
        <TaskButton $w={126} $ml={9} $pl={5} $gap={5} $ls={-0.9}><Ico w={13} h={15} box="0 0 13 15"><path d="M0 0h11v9l2 1v5H0z" fill="#f8df82" /><path d="M11 9l2 1v5h-3z" fill="#dfb94f" /></Ico>class1</TaskButton>
        <PinnedIcon $w={39}><Ico w={15}><rect width="16" height="16" rx="1" fill="#f47b20" /><path d="M10.5 1.5Q6 2 7.5 4.5T6.5 8Q3 9 3 11.5 3.5 14.5 7.5 14.5H13M11 2q2 1 1 2.5L10 4" stroke="#fff" strokeWidth="1.8" /><path d="M7 11q0-2.5 2.5-2.5T12.5 11 10 12.5" stroke="#fff" strokeWidth="1.4" /></Ico></PinnedIcon>
        <TaskButton $w={133} $pl={8} $active>
          <Ico w={14}><circle cx="8" cy="8" r="8" fill="#dd4b3e" /><path d="M1 4.5A8 8 0 0 0 8 16l3.5-6.5L4.5 9.5z" fill="#1da362" /><path d="M15 4.5H8l3.5 5.5L8 16A8 8 0 0 0 15 4.5z" fill="#fdd043" /><circle cx="8" cy="8" r="3.6" fill="#fff" /><circle cx="8" cy="8" r="2.9" fill="#4587f3" /></Ico>
          2d array - Google ...
        </TaskButton>
        <TaskButton $w={127} $ml={5} $pl={5} $gap={5}><Ico w={13} h={15} box="0 0 13 15"><path d="M3 1h10l-2.5 14H0z" fill="#a4d9e6" /><path d="M3 1h10v1.5H2.8z" fill="#e8f5f7" /><path d="M3.5 5h7M3 8h7M2.5 11h7" stroke="#63a8bc" strokeWidth=".7" /></Ico>topic covered.txt -...</TaskButton>
        <TaskButton $w={127} $ml={8} $pl={5} $gap={6} $ls={-0.82}><Ico w={11} h={15} box="0 0 11 15"><rect width="11" height="15" fill="#8ebde5" /><rect y="4.5" width="11" height="6" fill="#1e3966" /><path d="M2 2h7M2 12.5h7" stroke="#fff" /></Ico>Debut Professiona...</TaskButton>
        <TaskButton $w={126} $ml={8} $ls={-0.6}><Ico w={14}><rect width="16" height="16" rx="1.5" fill="#444" /><path d="M13 2.5v3L7.5 7.2 13 9v2.8L3 14.5v-3l5.5-1.7L3 8V5.3z" fill="#ff9c1a" /></Ico>E:\xampp\htdocs\...</TaskButton>
        <Tray>
          <TrayItem $w={36}><Ico w={11} h={7} box="0 0 11 7"><path d="M.7 6.3L5.5 1l4.8 5.3" stroke="#eee" strokeWidth="1.3" /></Ico></TrayItem>
          <TrayItem $w={10}><Ico w={15} h={13} box="0 0 15 13"><path d="M5 3.5h9v7.5H5zM3 1v3M1 1v3M.5 4h3.5v3q-2 1-3.5 0zM2.2 8v3H5" stroke="#eee" strokeWidth="1.1" /><path d="M7 5.5h5v3.5H7z" fill="#eee" /></Ico></TrayItem>
          <TrayItem $w={33}><Ico w={14} h={13} box="0 0 14 13"><path d="M.6 4.5h2L6 1.2v10.6L2.6 8.5h-2zM8.5 4.5l4 4M12.5 4.5l-4 4" stroke="#eee" strokeWidth="1.1" /></Ico></TrayItem>
          <TrayItem $w={16}><Ico w={13} h={13} box="0 0 13 13"><path d="M.6 13A12 12 0 0 1 12.5 1M3.6 13A9 9 0 0 1 12.5 4.2M6.5 13a6 6 0 0 1 6-5.5M9.3 13a3.2 3.2 0 0 1 3.2-3" stroke="#ddd" strokeWidth="1" /></Ico></TrayItem>
          <TrayItem $w={36}>ENG</TrayItem>
          <TrayItem $w={55}>8:11 PM</TrayItem>
          <TrayItem $w={40}><Ico w={16}><path d="M0 1h15v10.5H8l-3 3v-3H0z" fill="#fff" /><path d="M2.5 4h10M2.5 6.3h10M2.5 8.6h6" stroke="#222" strokeWidth="1" /><circle cx="12" cy="12" r="3.5" fill="#ddd" stroke="#222" /></Ico></TrayItem>
          <ShowDesktop />
        </Tray>
      </Taskbar>
    </Screen>
  );
}
